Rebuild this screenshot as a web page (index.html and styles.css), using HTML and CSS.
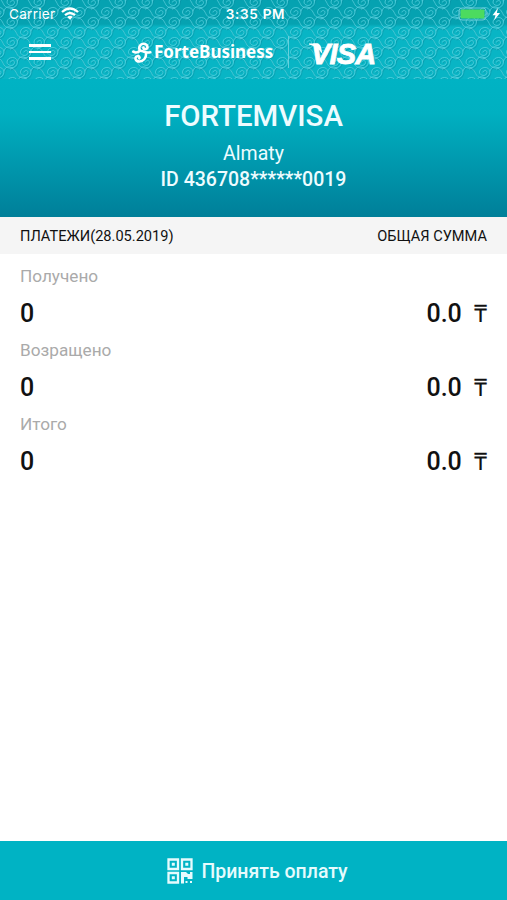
FILE: index.html
```html
<!DOCTYPE html>
<html lang="ru">
<head>
    <meta charset="UTF-8">
    <meta name="viewport" content="width=device-width, initial-scale=1.0">
    <title>ForteBusiness</title>
    <link rel="stylesheet" href="styles.css">
</head>
<body>
    <!-- Header with wave ornament -->
    <header class="header">
        <svg class="ornament" width="507" height="79">
            <defs>
                <g id="curl" fill="none" stroke-linecap="round">
                    <path d="M-15 -3C-12 -5 -10 -1 -8 3C-5 8 5 7 5.5 0C5.5 -6 -4.5 -6 -5 0C-5 4 2 5 2.5 0.5C2.5 -2 -1 -2 -1.5 0"/>
                    <path d="M5.5 -1C7 -6 11 -6 14 -4"/>
                </g>
                <g id="curls">
                    <use href="#curl"/><use href="#curl" x="27"/>
                    <use href="#curl" x="13.5" y="10"/><use href="#curl" x="-13.5" y="10"/><use href="#curl" x="40.5" y="10"/>
                    <use href="#curl" y="20"/><use href="#curl" x="27" y="20"/>
                    <use href="#curl" x="13.5" y="-10"/>
                </g>
                <pattern id="waves" width="27" height="20" patternUnits="userSpaceOnUse" patternTransform="translate(12 2)">
                    <use href="#curls" x="0.8" y="1" stroke="#048c9e" stroke-width="1.1" stroke-opacity=".4"/>
                    <use href="#curls" stroke="#5fd6e4" stroke-width="1" stroke-opacity=".7"/>
                </pattern>
            </defs>
            <rect width="507" height="79" fill="url(#waves)"/>
        </svg>

        <!-- Status bar -->
        <div class="status-bar">
            <div class="status-left">
                <span>Carrier</span>
                <svg width="18" height="13" viewBox="0 0 18 13" fill="none" stroke="#fff" stroke-width="2.3">
                    <path d="M1 5Q9 -2 17 5M4 8.2Q9 3.7 14 8.2"/>
                    <path d="M6.2 10Q9 7.5 11.8 10L9 12.8Z" fill="#fff" stroke="none"/>
                </svg>
            </div>
            <div class="status-time">3:35 PM</div>
            <div class="status-right">
                <svg width="44" height="14" viewBox="0 0 44 14">
                    <rect x="1" y="1" width="27" height="12" rx="3" fill="none" stroke="#6ccbd5"/>
                    <rect x="2.5" y="2.5" width="24" height="9" rx="1" fill="#4cdb5f"/>
                    <path d="M29.5 5q2 2 0 4z" fill="#8ed8df"/>
                    <path d="M40 1L34.5 8.2H37.5L36 13.5L42 6H38.8Z" fill="#fff"/>
                </svg>
            </div>
        </div>

        <!-- Navigation bar -->
        <div class="nav-bar">
            <div class="menu"><span></span><span></span><span></span></div>
            <div class="brand">
                <svg width="20" height="21" viewBox="0 0 20 21" fill="none" stroke="#fff" stroke-width="2.6" stroke-linecap="round">
                    <path d="M1.3 9.7C3.5 11 6 10.5 8 8.8M8 8.8C6 5 8.5 1.5 12 1.8C16 2.2 16.5 7 13.5 7.3C12 7.4 11.3 6.5 11.5 5.5"/>
                    <path d="M8 8.8C11 8 11.5 11.5 18.3 10.3M14 12C14.5 16 11 19.5 7.5 19.5C3 19.5 2.3 14.8 5.3 14.2C7.2 13.9 8 15.2 7.3 16.3"/>
                </svg>
                <span class="brand-name">ForteBusiness</span>
            </div>
            <div class="brand-divider"></div>
            <div class="visa">
                <svg width="14" height="12" viewBox="0 0 14 12"><path d="M0 .5H8Q11 .5 12 4L13.5 11Q8 3 0 1.5Z" fill="#fff"/></svg>
                <span>VISA</span>
            </div>
        </div>
    </header>

    <!-- Merchant info -->
    <section class="merchant">
        <h1>FORTEMVISA</h1>
        <p class="city">Almaty</p>
        <p class="merchant-id">ID 436708******0019</p>
    </section>

    <!-- Payments -->
    <main class="payments">
        <div class="table-head">
            <span>ПЛАТЕЖИ(28.05.2019)</span>
            <span>ОБЩАЯ СУММА</span>
        </div>
        <div class="row">
            <div class="label">Получено</div>
            <div class="values"><span>0</span><span class="sum">0.0 <span class="tenge">₸</span></span></div>
        </div>
        <div class="row">
            <div class="label">Возращено</div>
            <div class="values"><span>0</span><span class="sum">0.0 <span class="tenge">₸</span></span></div>
        </div>
        <div class="row">
            <div class="label">Итого</div>
            <div class="values"><span>0</span><span class="sum">0.0 <span class="tenge">₸</span></span></div>
        </div>
    </main>

    <button class="pay-button">
        <svg width="26" height="26" viewBox="0 0 26 26" fill="none" stroke="#e6fbfd" stroke-width="2.3">
            <path d="M1.5 1.5H11V11H1.5ZM15 1.5H24.5V11H15ZM1.5 15H11V24.5H1.5Z"/>
            <path d="M4.8 4.8h3v3h-3zM18.3 4.8h3v3h-3zM4.8 18.3h3v3h-3zM14 14h5l2 2h2v-2h2.5v7h-5v-2h-3.500v6.500h-3zM18.5 23h2v2h-2zM23 23h2v2h-2z" fill="#e6fbfd" stroke="none"/>
        </svg>
        <span>Принять оплату</span>
    </button>
</body>
</html>
```
FILE: styles.css
```css
* {
    box-sizing: border-box;
}
body {
    margin: 0;
    height: 900px;
    display: flex;
    flex-direction: column;
    font-family: Roboto, sans-serif;
    background-color: #fff;
    color: #111;
}
.header {
    position: relative;
    height: 79px;
    background: linear-gradient(#05a2b1 0, #05a2b1 24px, #08b5c5 27px, #08b5c5 100%);
    color: #fff;
}
.ornament {
    position: absolute;
    top: 0;
    left: 0;
}
.status-bar {
    position: relative;
    height: 27px;
    padding: 0 5px 0 9px;
    display: grid;
    grid-template-columns: 1fr auto 1fr;
    align-items: center;
    font-family: Inter, sans-serif;
    font-size: 13.5px;
}
.status-left {
    display: flex;
    align-items: center;
    gap: 6px;
    letter-spacing: 0.3px;
}
.status-time {
    font-weight: 600;
    font-size: 13.5px;
    letter-spacing: 0.7px;
}
.status-right {
    display: flex;
    justify-content: flex-end;
}
.nav-bar {
    position: relative;
    height: 52px;
    padding: 0 0 2px 29px;
    display: flex;
    align-items: center;
}
.menu {
    width: 22px;
    display: flex;
    flex-direction: column;
    gap: 4px;
}
.menu span {
    height: 2.5px;
    background-color: #fff;
}
.brand {
    margin-left: 81px;
    width: 142px;
    display: flex;
    align-items: center;
    gap: 2px;
}
.brand-name {
    font-family: "Noto Sans", sans-serif;
    font-size: 17px;
    line-height: 20px;
    font-weight: 700;
    padding-bottom: 1px;
}
.brand-divider {
    margin-left: 14px;
    width: 1px;
    height: 32px;
    background-color: #65d1dc;
}
.visa {
    margin-left: 20px;
    padding-top: 4px;
    display: flex;
    align-items: flex-start;
    font: italic 700 29px/34px "Liberation Sans", sans-serif;
    letter-spacing: -0.8px;
    -webkit-text-stroke: 0.8px #fff;
}
.visa svg {
    margin: 6px -12px 0 0;
}
.merchant {
    height: 138px;
    padding-top: 18px;
    background: linear-gradient(#00b3c4 0, #00b0c1 25%, #007f99 100%);
    color: #eefcff;
    text-align: center;
}
.merchant h1 {
    margin: 0;
    font-size: 29.4px;
    line-height: 38px;
    font-weight: 500;
}
.merchant p {
    margin: 0;
    font-size: 19.5px;
    line-height: 26px;
}
.merchant .city {
    margin-top: 6px;
}
.merchant .merchant-id {
    font-weight: 500;
}
.payments {
    flex: 1;
}
.table-head {
    height: 37px;
    padding: 0 20px;
    display: flex;
    align-items: center;
    justify-content: space-between;
    background-color: #f5f5f5;
    font-size: 14.6px;
}
.row {
    height: 74px;
    padding: 10px 20px 0;
}
.label {
    font-size: 17.2px;
    line-height: 25px;
    color: #aaa;
}
.values {
    display: flex;
    justify-content: space-between;
    font-size: 25px;
    line-height: 50px;
    font-weight: 500;
}
.tenge {
    margin-left: 6px;
    font-size: 24px;
}
.pay-button {
    height: 59px;
    border: none;
    background-color: #00b3c4;
    color: #e6fbfd;
    display: flex;
    align-items: center;
    justify-content: center;
    gap: 8px;
    padding: 1px 0 0 8px;
    font-family: Roboto, sans-serif;
    font-size: 19.5px;
    font-weight: 500;
}
```
